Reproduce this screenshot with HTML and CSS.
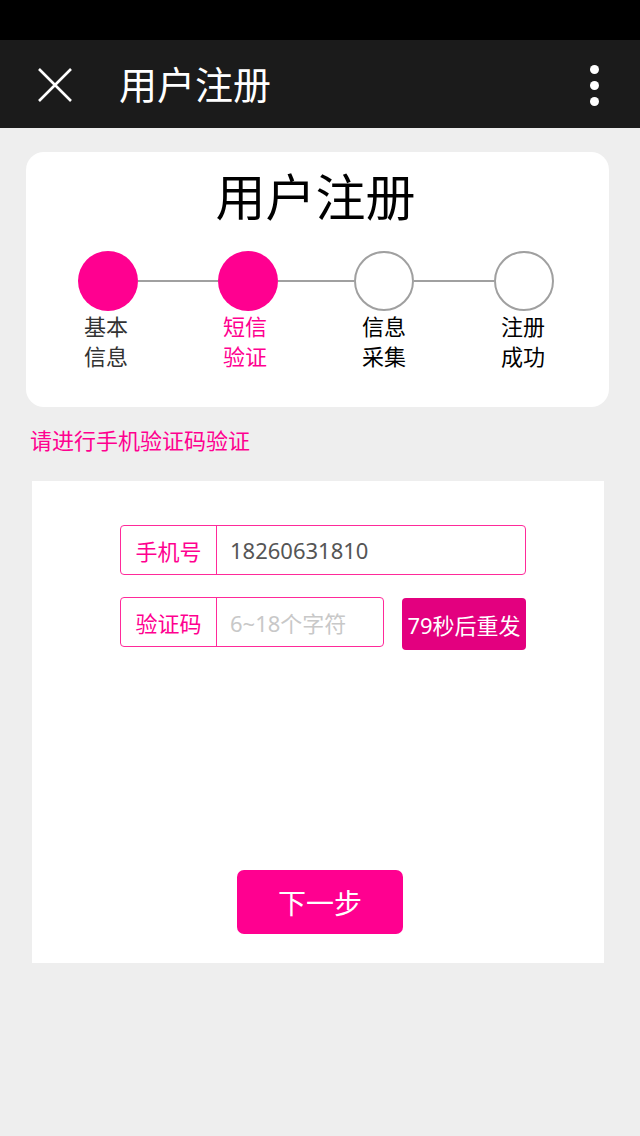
FILE: index.html
```html
<!DOCTYPE html>
<html lang="zh-CN">
<head>
    <meta charset="UTF-8">
    <title>用户注册</title>
    <link rel="stylesheet" href="styles.css">
</head>
<body>
<div class="statusbar"></div>

<!-- 顶部导航 -->
<div class="navbar">
    <svg class="nav-close" width="36" height="34" viewBox="0 0 36 34">
        <path d="M2 1 L34 33 M34 1 L2 33" stroke="#fff" stroke-width="2.6" fill="none"/>
    </svg>
    <div class="nav-title">用户注册</div>
    <div class="nav-more"><i></i><i></i><i></i></div>
</div>

<!-- 步骤卡片 -->
<div class="card">
    <h1 class="card-title">用户注册</h1>
    <div class="track">
        <span class="dot done"></span>
        <span class="line"></span>
        <span class="dot done"></span>
        <span class="line mid"></span>
        <span class="dot"></span>
        <span class="line"></span>
        <span class="dot"></span>
    </div>
    <div class="labels">
        <span class="label first">基本<br>信息</span>
        <span class="label active">短信<br>验证</span>
        <span class="label">信息<br>采集</span>
        <span class="label">注册<br>成功</span>
    </div>
</div>

<p class="hint">请进行手机验证码验证</p>

<!-- 表单 -->
<div class="panel">
    <div class="field">
        <span class="field-name">手机号</span>
        <span class="field-value">18260631810</span>
    </div>
    <div class="code-row">
        <div class="field short">
            <span class="field-name">验证码</span>
            <span class="field-value placeholder">6~18个字符</span>
        </div>
        <button class="resend">79秒后重发</button>
    </div>
    <button class="next">下一步</button>
</div>
</body>
</html>
```

FILE: styles.css
```css
body{
    margin: 0;
    background: #eeeeee;
    font-family: "Noto Sans", "Noto Sans CJK SC", sans-serif;
}
.statusbar{
    height: 40px;
    background: #000;
}
.navbar{
    height: 88px;
    background: #1b1b1b;
    display: flex;
    align-items: center;
    padding: 0 0 0 37px;
}
.nav-close{
    display: block;
    margin-top: 2px;
}
.nav-title{
    color: #fff;
    font-size: 38px;
    margin-left: 46px;
    flex: 1;
    line-height: 42px;
}
.nav-more{
    width: 8px;
    margin-right: 42px;
    display: flex;
    flex-direction: column;
    gap: 7px;
    margin-top: 2px;
}
.nav-more i{
    display: block;
    width: 9px;
    height: 9px;
    border-radius: 50%;
    background: #fff;
}

.card{
    width: 583px;
    height: 255px;
    margin: 24px 0 0 26px;
    background: #fff;
    border-radius: 18px;
    box-sizing: border-box;
    padding-top: 14px;
}
.card-title{
    margin: 0;
    text-align: center;
    font-size: 50px;
    font-weight: normal;
    line-height: 62px;
    color: #000;
    padding-right: 4px;
}
.track{
    display: flex;
    align-items: center;
    margin: 23px 0 0 52px;
}
.dot{
    width: 60px;
    height: 60px;
    border-radius: 50%;
    box-sizing: border-box;
    border: 2px solid #a0a0a0;
    background: #fff;
}
.dot.done{
    border: none;
    background: #ff0090;
}
.line{
    width: 80px;
    height: 2px;
    background: #a0a0a0;
}
.line.mid{
    width: 76px;
}
.labels{
    display: flex;
    margin-left: 50px;
    gap: 79px;
}
.label{
    width: 60px;
    text-align: center;
    font-size: 22px;
    line-height: 30px;
    color: #000;
}
.label.first{
    color: #333;
}
.label.active{
    color: #ff0090;
}

.hint{
    margin: 16px 0 0 30px;
    font-size: 22px;
    line-height: 34px;
    color: #ff0090;
}

.panel{
    width: 572px;
    margin: 24px 0 0 32px;
    background: #fff;
    box-sizing: border-box;
    padding: 44px 0 29px 88px;
}
.field{
    width: 406px;
    height: 50px;
    box-sizing: border-box;
    border: 1px solid #ff2a9a;
    border-radius: 4px;
    display: flex;
    align-items: center;
    font-size: 22px;
}
.field.short{
    width: 264px;
}
.field-name{
    width: 96px;
    height: 100%;
    border-right: 1px solid #ff2a9a;
    box-sizing: border-box;
    color: #ff0090;
    display: flex;
    align-items: center;
    justify-content: center;
}
.field-value{
    padding-left: 13px;
    color: #555;
}
.field-value.placeholder{
    color: #c8c8c8;
}
.code-row{
    display: flex;
    align-items: flex-start;
    margin-top: 22px;
}
.resend{
    margin: 1px 0 0 18px;
    width: 124px;
    height: 52px;
    border: none;
    border-radius: 4px;
    background: #e3007f;
    color: #fff;
    font-family: inherit;
    font-size: 22px;
    padding: 0;
}
.next{
    display: block;
    margin: 220px 0 0 117px;
    width: 166px;
    height: 64px;
    border: none;
    border-radius: 7px;
    background: #ff0090;
    color: #fff;
    font-family: inherit;
    font-size: 28px;
    padding: 0;
}
```
